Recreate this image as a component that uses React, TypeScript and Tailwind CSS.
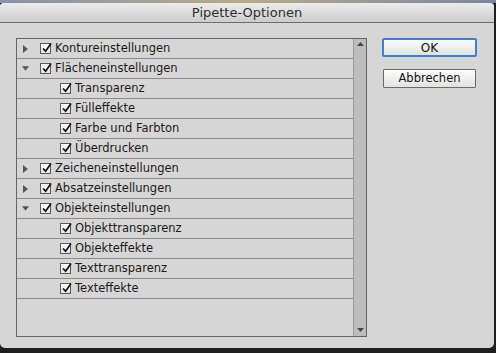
import React from 'react';

type Row = { label: string; level: 0 | 1; open?: boolean };

const rows: Row[] = [
  { label: 'Kontureinstellungen', level: 0, open: false },
  { label: 'Flächeneinstellungen', level: 0, open: true },
  { label: 'Transparenz', level: 1 },
  { label: 'Fülleffekte', level: 1 },
  { label: 'Farbe und Farbton', level: 1 },
  { label: 'Überdrucken', level: 1 },
  { label: 'Zeicheneinstellungen', level: 0, open: false },
  { label: 'Absatzeinstellungen', level: 0, open: false },
  { label: 'Objekteinstellungen', level: 0, open: true },
  { label: 'Objekttransparenz', level: 1 },
  { label: 'Objekteffekte', level: 1 },
  { label: 'Texttransparenz', level: 1 },
  { label: 'Texteffekte', level: 1 },
];

function Check() {
  return (
    <span className="relative w-[11px] h-[11px] shrink-0 border border-[#5a5a5a] bg-gradient-to-b from-[#ffffff] to-[#e4e4e4]">
      <svg className="absolute left-[0px] top-[-2px]" width="12" height="12" viewBox="0 0 12 12">
        <path d="M2 6.5 L4.6 9.2 L10 1.5" fill="none" stroke="#111" strokeWidth="1.7" />
      </svg>
    </span>
  );
}

function Disclosure({ open }: { open?: boolean }) {
  return (
    <span className="w-[7px] h-[8px] ml-[5px] flex items-center justify-center">
      {open ? (
        <svg width="8" height="5" viewBox="0 0 8 5">
          <path d="M0 0 L8 0 L4 5 Z" fill="#555" />
        </svg>
      ) : (
        <svg width="5" height="8" viewBox="0 0 5 8">
          <path d="M0 0 L5 4 L0 8 Z" fill="#555" />
        </svg>
      )}
    </span>
  );
}

export default function App() {
  return (
    <div
      className="w-[496px] h-[353px] bg-[#1f1f1f] overflow-hidden text-[#1c1a17]"
      style={{ fontFamily: '"DejaVu Sans", "Liberation Sans", sans-serif' }}
    >
      <div className="h-[3px] bg-gradient-to-r from-[#8793aa] via-[#b8aa86] to-[#7a86a0]" />
      <div className="w-[494px] h-[345px] bg-[#d6d6d6] rounded-t-[4px] rounded-b-[5px] flex flex-col">
        {/* title bar */}
        <div className="h-[20px] rounded-t-[4px] border-b border-[#6f6f6f] bg-gradient-to-b from-[#ececec] to-[#cccccc] flex items-center justify-center text-[13px] text-[#2e2e2e]">
          Pipette-Optionen
        </div>

        <div className="flex pl-[16px] pt-[15px]">
          {/* list */}
          <div className="w-[351px] h-[299px] border border-[#666666] flex">
            <div className="flex-1 flex flex-col">
              {rows.map((r) => (
                <div
                  key={r.label}
                  className="h-[20px] border-b border-[#8a8a8a] flex items-center text-[11.5px]"
                >
                  {r.level === 0 ? (
                    <>
                      <Disclosure open={r.open} />
                      <span className="ml-[11px] flex">
                        <Check />
                      </span>
                    </>
                  ) : (
                    <span className="ml-[43px] flex">
                      <Check />
                    </span>
                  )}
                  <span className="ml-[4px] pt-[1px] leading-none">{r.label}</span>
                </div>
              ))}
            </div>
            <div className="w-[13px] bg-[#bdbdbd] border-l border-[#9a9a9a] flex flex-col items-center justify-between pt-[3px] pb-[4px]">
              <svg width="7" height="4" viewBox="0 0 7 4">
                <path d="M0 4 L3.5 0 L7 4 Z" fill="#4a4a4a" />
              </svg>
              <svg width="7" height="4" viewBox="0 0 7 4">
                <path d="M0 0 L7 0 L3.5 4 Z" fill="#4a4a4a" />
              </svg>
            </div>
          </div>

          {/* buttons */}
          <div className="ml-[15px] flex flex-col">
            <button className="w-[95px] h-[19px] border-2 border-[#3d7fd1] rounded-[2px] bg-gradient-to-b from-[#fdfdfd] to-[#e2e2e2] text-[12px] leading-none text-[#111]">
              OK
            </button>
            <button className="mt-[12px] ml-[1px] w-[93px] h-[19px] border border-[#6a6a6a] rounded-[1px] bg-gradient-to-b from-[#fdfdfd] to-[#e2e2e2] text-[11.5px] leading-none text-[#111]">
              Abbrechen
            </button>
          </div>
        </div>
      </div>
    </div>
  );
}
